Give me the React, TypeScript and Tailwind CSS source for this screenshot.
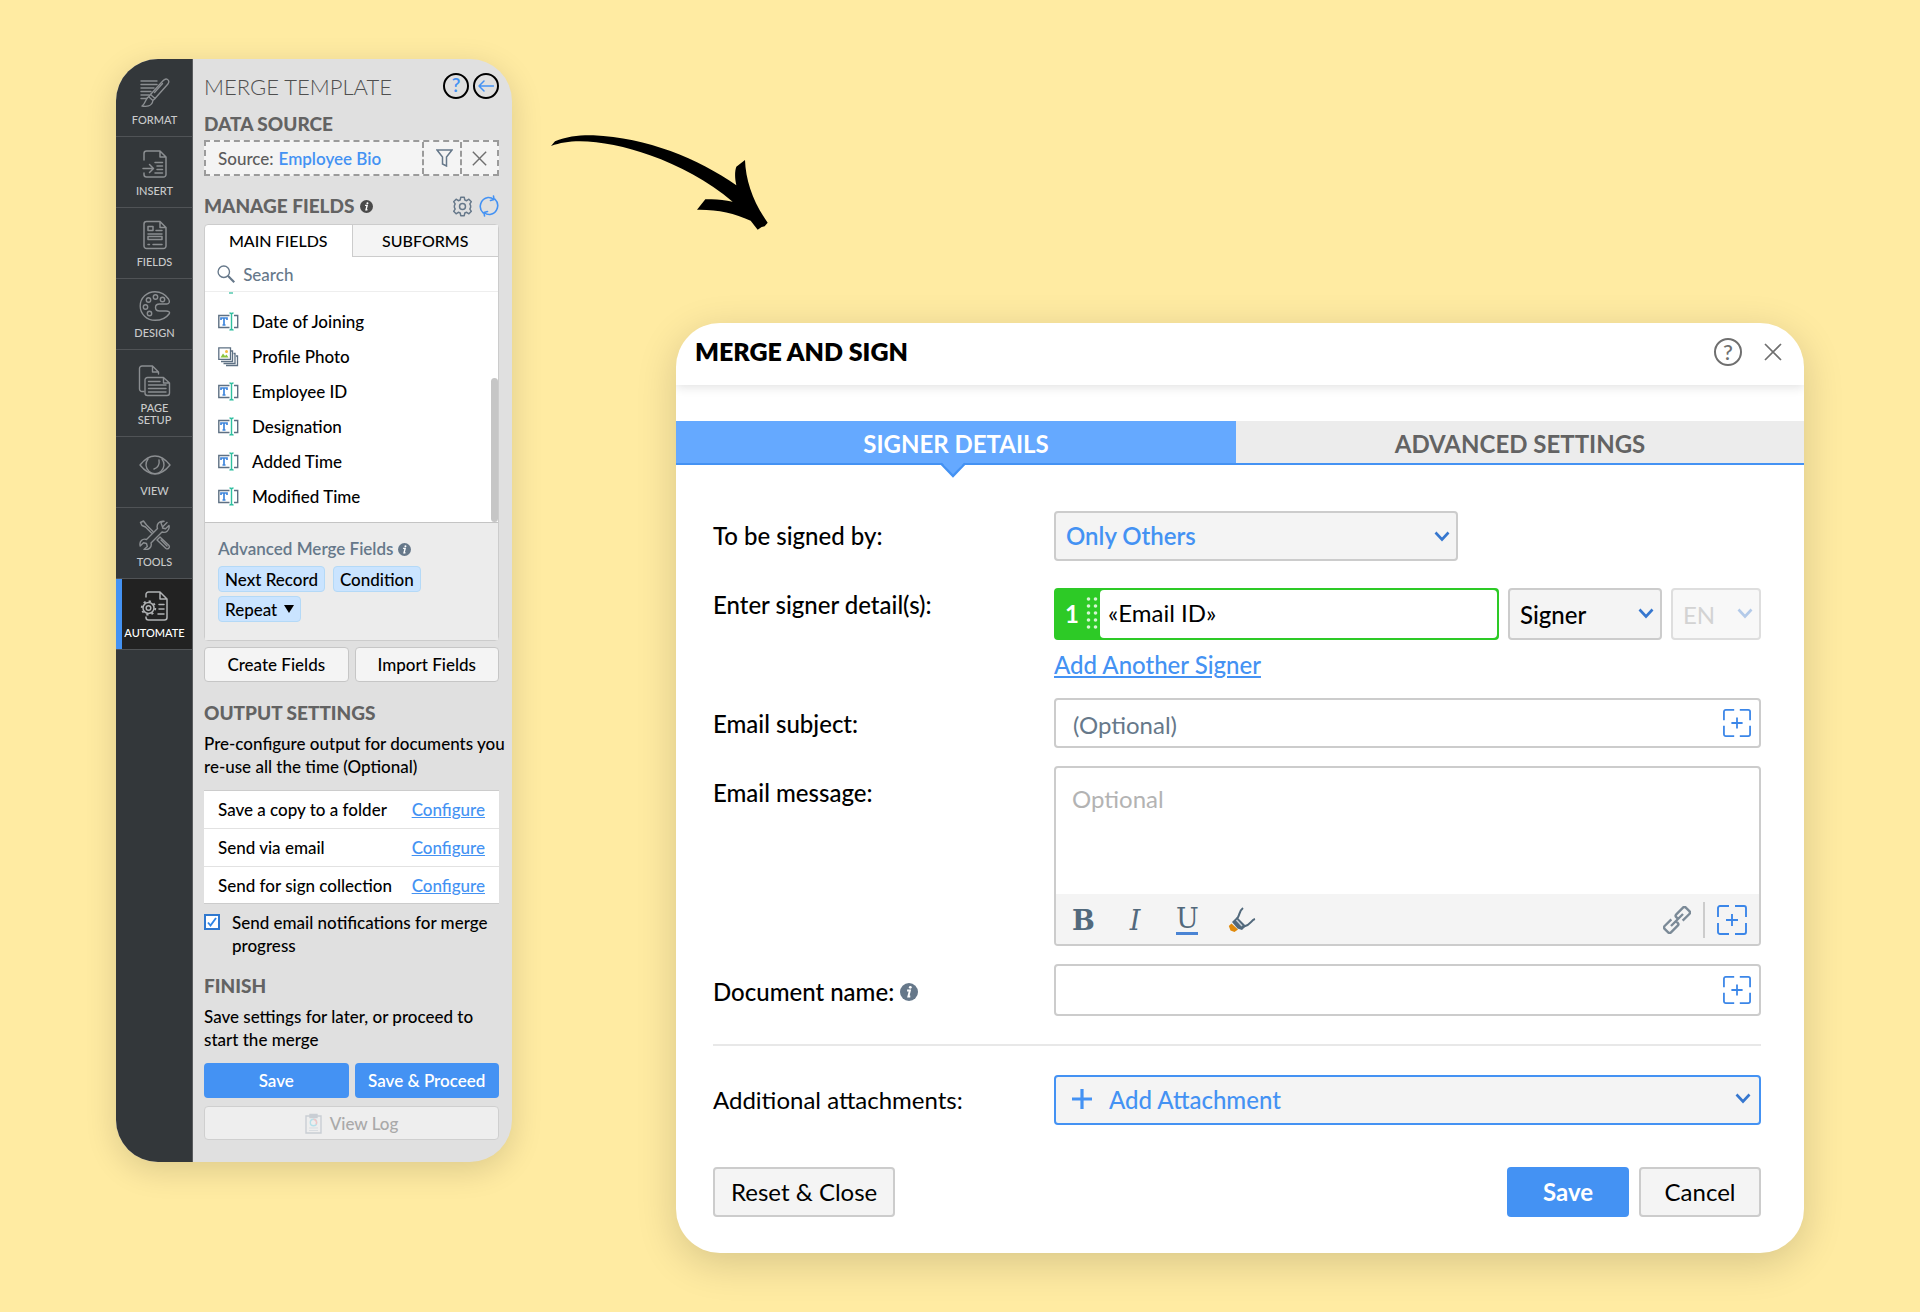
import type { ReactNode } from 'react';

const strokeProps = {
    fill: 'none',
    stroke: 'currentColor',
    strokeLinecap: 'round' as const,
    strokeLinejoin: 'round' as const,
};

function FormatIcon() {
    return (
        <svg width="30" height="30" viewBox="0 0 30 30" strokeWidth="1.4" {...strokeProps}>
            <path d="M1 3h16M1 6.5h16M1 10h13M1 13.500h10M1 17h8M1 20.500h6" />
            <path d="M24.500 1.600c2-1.500 4.800.3 4.200 2.700-.2.800-.6 1.400-1 2L15 20.500l-4.500-4L23 2.800c.5-.5 1-.9 1.500-1.200Z" />
            <path d="m22.500 5.500-8 9M10.500 16.500l-1.800 2.200 4.200 3.800 2.100-2M8.700 18.700C5.500 20 6 25 2 28c4 .8 10 .8 10.900-5.500" />
        </svg>
    );
}

function InsertIcon() {
    return (
        <svg width="30" height="30" viewBox="0 0 30 30" strokeWidth="1.5" {...strokeProps}>
            <path d="M4 11V4.500A2.500 2.500 0 0 1 6.500 2H20l6 6v17.500a2.500 2.500 0 0 1-2.500 2.500h-17A2.500 2.500 0 0 1 4 25.500V24M20 2v6h6" />
            <path d="M3 19.500h10M9.500 15.500l4 4-4 4M15 13.500h7.500M17 17h5.500M17 20.500h5.500M15 24h7.500" />
        </svg>
    );
}

function FieldsIcon() {
    return (
        <svg width="30" height="30" viewBox="0 0 30 30" strokeWidth="1.5" {...strokeProps}>
            <path d="M6.500 1.500H20l6 6V26a2.500 2.500 0 0 1-2.500 2.500h-17A2.500 2.500 0 0 1 4 26V4a2.500 2.500 0 0 1 2.500-2.500ZM20 1.500v6h6" />
            <path d="M8 6.500h5v4H8zM16 10.500h6M8 14h14M8 16.500h14v3H8zM8 24.500h1.500M13 24.500h9" />
        </svg>
    );
}

function DesignIcon() {
    return (
        <svg width="32" height="30" viewBox="0 0 32 30" strokeWidth="1.400" {...strokeProps}>
            <path d="M29.500 8C26.500 3.500 21.500.7 16 .7 8 .7 1.200 7 1.200 15S8 29.300 16 29.300c6 0 11-2 14-6.300 1.500-2-.5-3-3-3h-6.500c-2.500 0-4-1.500-4-3.500s1.500-3.500 4-3.500H28c2.500 0 3-2.500 1.500-5Z" />
            <circle cx="9.500" cy="9" r="2.200" />
            <circle cx="16.500" cy="6" r="2.200" />
            <circle cx="23.500" cy="8.500" r="2.200" />
            <circle cx="6.500" cy="16" r="2.200" />
            <circle cx="10.500" cy="22.500" r="2.200" />
        </svg>
    );
}

function PageSetupIcon() {
    return (
        <svg width="34" height="32" viewBox="0 0 34 32" strokeWidth="1.400" {...strokeProps}>
            <path d="M6 26.500H4A2.500 2.500 0 0 1 1.500 24V3.500A2.500 2.500 0 0 1 4 1h10.500l6 6v2M14.500 1v6h6" />
            <path d="M9.500 12.500h16l6 5.500v10a2.500 2.500 0 0 1-2.500 2.500H9.500A2.500 2.500 0 0 1 7 28V15a2.500 2.500 0 0 1 2.500-2.500ZM25.500 12.500V18h6" />
            <path d="M10.500 16.500H22M10.500 20H28M10.500 23.500H28M10.500 27H28" />
        </svg>
    );
}

function ViewIcon() {
    return (
        <svg width="32" height="30" viewBox="0 0 32 30" strokeWidth="1.400" {...strokeProps}>
            <path d="M1 16c4-5 9-9 15-9s11 4 15 9c-4 5-9 9-15 9S5 21 1 16Z" />
            <path d="M9 10a9 9 0 1 0 14 0" />
            <path d="M20 11c.8 4-1 8-5 9" />
        </svg>
    );
}

function ToolsIcon() {
    return (
        <svg width="32" height="30" viewBox="0 0 32 30" strokeWidth="1.400" {...strokeProps}>
            <path d="M28 2.500 23.500 7l-1.500-4c.5-1 2-1.500 3-1.700-4.500-.8-8 3-6.500 7.200L7.500 19.500C3.500 18 0 21.500 1.200 26l3.300-3.300 3 .8.800 3L5 29.500c4.500 1 8.300-2.500 7-6.500l11-11c4 1.500 8-2 7-6.500l-3.500 3.200-3-.7" />
            <path d="m1.500 2.500 3-1.500 3 4L14 11.500M1.500 2.500l1.500 3 3.500 1.500 6 6M19 19l2-2 9 8.500c1.200 2-1 4.200-3 3L18 20l1-1ZM22 20l6 6" />
        </svg>
    );
}

function AutomateIcon() {
    return (
        <svg width="32" height="30" viewBox="0 0 32 30" strokeWidth="1.500" {...strokeProps}>
            <path d="M7 6V3.500A2.500 2.500 0 0 1 9.500 1H21l7 7v18.500a2.500 2.500 0 0 1-2.500 2.500h-16A2.500 2.500 0 0 1 7 26.500V26M21 1v7h7" />
            <circle cx="9.500" cy="17" r="5.500" />
            <circle cx="9.500" cy="17" r="2.300" />
            <circle cx="9.500" cy="17" r="6.800" strokeWidth="1.800" strokeDasharray="2.200 3.140" strokeLinecap="butt" />
            <path d="M20 13.500h5M20 18h5M19 23h6" />
        </svg>
    );
}

const navItems = [
    { label: 'FORMAT', icon: FormatIcon },
    { label: 'INSERT', icon: InsertIcon },
    { label: 'FIELDS', icon: FieldsIcon },
    { label: 'DESIGN', icon: DesignIcon },
    { label: 'PAGE SETUP', icon: PageSetupIcon, tall: true },
    { label: 'VIEW', icon: ViewIcon },
    { label: 'TOOLS', icon: ToolsIcon },
    { label: 'AUTOMATE', icon: AutomateIcon, active: true },
];

const fields = [
    { name: 'Date of Joining', type: 'text' },
    { name: 'Profile Photo', type: 'photo' },
    { name: 'Employee ID', type: 'text' },
    { name: 'Designation', type: 'text' },
    { name: 'Added Time', type: 'text' },
    { name: 'Modified Time', type: 'text' },
];

const outputs = ['Save a copy to a folder', 'Send via email', 'Send for sign collection'];

function TextFieldIcon() {
    return (
        <svg width="21" height="19" viewBox="0 0 21 19" fill="none">
            <path d="M11.500 3.500H.8v12h10.700M16 3.500h3.700v12H16" stroke="#5d7083" strokeWidth="1.400" />
            <path d="M3 8V6h6v2M6 6v7M4.500 13h3" stroke="#3f86dc" strokeWidth="1.700" />
            <path d="M11.500 1c1.200 0 2 .4 2 1.500v14c0 1.100-.8 1.500-2 1.500M15.500 1c-1.200 0-2 .4-2 1.500v14c0 1.100.8 1.500 2 1.500" stroke="#2fbf9f" strokeWidth="1.400" />
        </svg>
    );
}

function PhotoIcon() {
    return (
        <svg width="21" height="20" viewBox="0 0 21 20" fill="none" stroke="#5d7083" strokeWidth="1.300">
            <path d="M8 18.500h11.500V9H18" />
            <path d="M5.500 16.500H17V6.500h-1.500" />
            <path d="M3 14.500h11.500V4H13" />
            <path d="M.8.800H12.500v11.500H.8z" fill="#fff" />
            <path d="m2.500 10.500 2.500-4 2 2.500 1.500-1.500 2 3z" fill="#8cc63f" stroke="none" />
            <circle cx="8.500" cy="4.500" r="1.500" fill="#f5b83d" stroke="none" />
        </svg>
    );
}

function InfoIcon({ size, className }: { size: number; className: string }) {
    return (
        <svg width={size} height={size} viewBox="0 0 14 14" className={className}>
            <circle cx="7" cy="7" r="7" fill="currentColor" />
            <circle cx="8" cy="3.400" r="1.100" fill="#fff" />
            <path d="M5.500 5.800h2.200l-1.200 4.700h1.500" fill="none" stroke="#fff" strokeWidth="1.500" />
        </svg>
    );
}

function Chevron({ className = '' }: { className?: string }) {
    return (
        <svg width="16" height="11" viewBox="0 0 16 11" className={`pointer-events-none absolute text-[#3677cf] ${className}`}>
            <path d="m1.500 1.500 6.500 7 6.500-7" fill="none" stroke="currentColor" strokeWidth="2.600" />
        </svg>
    );
}

function CloseIcon({ size }: { size: number }) {
    return (
        <svg width={size} height={size} viewBox="0 0 18 18" fill="none" stroke="#6f6f6f" strokeWidth="1.700">
            <path d="m1 1 16 16M17 1 1 17" />
        </svg>
    );
}

function InsertFieldIcon({ size }: { size: number }) {
    return (
        <svg width={size} height={size} viewBox="0 0 30 30" fill="none" stroke="#3b86e8" strokeWidth="1.900">
            <path d="M1 12V3a2 2 0 0 1 2-2h9M18 1h9a2 2 0 0 1 2 2v9M29 18v9a2 2 0 0 1-2 2h-9M12 29H3a2 2 0 0 1-2-2v-9M15 9v12M9 15h12" />
        </svg>
    );
}

function Heading({ children }: { children: ReactNode }) {
    return <h2 className="text-[19px] leading-6 font-black text-[#636363]">{children}</h2>;
}

function Sidebar() {
    return (
        <nav className="w-[77px] shrink-0 border-r border-[#5a5c5e] bg-[#33373a] pt-[7px]">
            {navItems.map((item) => (
                <a
                    key={item.label}
                    href="#"
                    className={`flex flex-col items-center border-b border-[#505356] pb-[10px] text-center ${
                        item.tall ? 'pt-4 pr-4 pl-[17px]' : 'pt-3 pl-px'
                    } ${item.active ? 'bg-[#222222] text-white shadow-[inset_6px_0_0_#4492f3]' : 'text-[#c9cacb]'}`}
                >
                    <span className={`flex h-[30px] items-center ${item.active ? 'text-[#b0b2b4]' : 'text-[#8b8e91]'}`}>
                        <item.icon />
                    </span>
                    <span className="mt-[6px] text-[11px] leading-3 font-medium">{item.label}</span>
                </a>
            ))}
        </nav>
    );
}

function MergePanel() {
    return (
        <section className="flex w-[396px] shrink-0 overflow-hidden rounded-[42px] bg-[#e0e0e0] shadow-[0_8px_32px_rgba(0,0,0,0.14)]">
            <Sidebar />
            <div className="flex-1 pt-[13px] pr-[13px] pb-[22px] pl-[11px] text-[17px] leading-[23px] font-medium">
                <div className="flex h-7 items-center">
                    <h1 className="flex-1 text-[22px] font-light text-[#4f4f4f]">MERGE TEMPLATE</h1>
                    <button aria-label="Help" className="flex size-[26px] items-center justify-center rounded-full border-2 border-black pb-[3px] text-[19px] leading-none font-semibold text-[#4492f3]">
                        ?
                    </button>
                    <button aria-label="Back" className="ml-1 flex size-[26px] items-center justify-center rounded-full border-2 border-black text-[#4492f3]">
                        <svg width="16" height="12" viewBox="0 0 16 12" strokeWidth="1.500" {...strokeProps}>
                            <path d="M15.500 6H1M6 1 1 6l5 5" />
                        </svg>
                    </button>
                </div>

                <div className="mt-3">
                    <Heading>DATA SOURCE</Heading>
                </div>
                <div className="mt-1 flex h-9 border-2 border-dashed border-[#9b9b9b] bg-[#f4f4f4]">
                    <p className="flex flex-1 items-center gap-[5px] pl-3 text-[#5c5c5c]">
                        Source: <span className="font-semibold text-[#4492f3]">Employee Bio</span>
                    </p>
                    <button aria-label="Filter" className="flex w-[38px] items-center justify-center border-l-2 border-dashed border-[#9b9b9b] pl-1">
                        <svg width="17" height="18" viewBox="0 0 17 18" fill="none" stroke="#66788a" strokeWidth="1.500">
                            <path d="M1 1h15l-5.500 7v9l-4-2V8z" />
                        </svg>
                    </button>
                    <button aria-label="Remove source" className="flex w-[37px] items-center justify-center border-l-2 border-dashed border-[#9b9b9b]">
                        <CloseIcon size={15} />
                    </button>
                </div>

                <div className="mt-[18px] flex items-center">
                    <Heading>MANAGE FIELDS</Heading>
                    <InfoIcon size={13} className="ml-[6px] text-[#4a4a4a]" />
                    <button aria-label="Field settings" className="ml-auto">
                        <svg width="21" height="21" viewBox="0 0 24 24" fill="none" stroke="#66788a" strokeWidth="1.700" strokeLinejoin="round">
                            <path d="M10 1.500h4l.6 3 2.200.9 2.500-1.700 2.800 2.800-1.700 2.500.9 2.200v1.600l-.9 2.200 1.700 2.500-2.800 2.800-2.500-1.700-2.200.9-.6 3h-4l-.6-3-2.200-.9-2.500 1.700-2.800-2.800 1.700-2.500-.9-2.200v-1.600l.9-2.200-1.700-2.500 2.800-2.800 2.500 1.700 2.200-.9z" />
                            <circle cx="12" cy="12" r="3.400" />
                        </svg>
                    </button>
                    <button aria-label="Refresh fields" className="ml-[6px]">
                        <svg width="20" height="22" viewBox="0 0 20 22" strokeWidth="1.600" className="text-[#4492f3]" {...strokeProps}>
                            <path d="M4.200 18A9 9 0 0 1 9 2.500c2-.1 4 .3 5.500 1.800M15.800 4A9 9 0 0 1 11 19.500c-2 .1-4-.3-5.500-1.800" />
                            <path d="M11.500 5.500 15 4.500 14.500 1M8.500 16.500 5 17.500l.5 3.500" />
                        </svg>
                    </button>
                </div>

                <div className="mt-[6px] rounded-sm border border-[#cccccc] bg-white">
                    <div role="tablist" className="grid grid-cols-2 text-base leading-[31px]">
                        <button role="tab" aria-selected="true" className="border-b border-transparent">MAIN FIELDS</button>
                        <button role="tab" aria-selected="false" className="border-b border-l border-[#cccccc] bg-[#f4f4f4]">SUBFORMS</button>
                    </div>
                    <label className="flex h-[35px] items-center gap-2 border-b border-[#eeeeee] pl-3">
                        <svg width="20" height="20" viewBox="0 0 20 20" fill="none" stroke="#66788a">
                            <circle cx="7.500" cy="7.500" r="6.300" strokeWidth="1.500" />
                            <path d="m12 12 7 7" strokeWidth="2.400" />
                        </svg>
                        <input type="search" placeholder="Search" aria-label="Search fields" className="w-full outline-none placeholder:text-[#66788a]" />
                    </label>
                    <div className="relative h-[230px] overflow-hidden">
                        <div className="h-3 pl-6">
                            <div className="h-[2px] w-1 bg-[#7fd6c3]" />
                        </div>
                        <ul>
                            {fields.map((field) => (
                                <li key={field.name} className="flex h-[35px] items-center gap-[13px] pl-[13px]">
                                    {field.type === 'photo' ? <PhotoIcon /> : <TextFieldIcon />}
                                    {field.name}
                                </li>
                            ))}
                        </ul>
                        <div className="absolute right-0 bottom-0 h-36 w-[7px] rounded bg-[#c6c6c6]" />
                    </div>
                    <div className="border-t border-[#c4c4c4] bg-[#ececec] px-[13px] pt-4 pb-[18px]">
                        <h3 className="flex items-center gap-1 leading-5 font-semibold text-[#66788a]">
                            Advanced Merge Fields <InfoIcon size={13} className="text-[#66788a]" />
                        </h3>
                        <div className="mt-[7px] flex flex-wrap gap-x-2 gap-y-1">
                            <button className="h-[26px] rounded-sm border border-[#b4d9f7] bg-[#cae4ff] px-[6px]">Next Record</button>
                            <button className="h-[26px] rounded-sm border border-[#b4d9f7] bg-[#cae4ff] px-[6px]">Condition</button>
                            <button aria-haspopup="menu" className="flex h-[26px] items-center gap-[7px] rounded-sm border border-[#b4d9f7] bg-[#cae4ff] px-[6px]">
                                Repeat
                                <svg width="10" height="8" viewBox="0 0 10 8">
                                    <path d="M0 0h10L5 8z" />
                                </svg>
                            </button>
                        </div>
                    </div>
                </div>

                <div className="mt-[6px] grid grid-cols-2 gap-[6px]">
                    <button className="h-[35px] rounded-sm border border-[#c6c6c6] bg-[#f4f4f4]">Create Fields</button>
                    <button className="h-[35px] rounded-sm border border-[#c6c6c6] bg-[#f4f4f4]">Import Fields</button>
                </div>

                <div className="mt-[19px]">
                    <Heading>OUTPUT SETTINGS</Heading>
                </div>
                <p className="mt-[7px] -mr-2">Pre-configure output for documents you re-use all the time (Optional)</p>
                <ul className="mt-3 border-y border-[#cccccc] bg-white">
                    {outputs.map((output) => (
                        <li key={output} className="flex h-[38px] items-center justify-between border-b border-[#e2e2e2] px-[14px] last:h-9 last:border-b-0">
                            {output}
                            <a href="#" className="text-[#4492f3] underline">Configure</a>
                        </li>
                    ))}
                </ul>
                <label className="mt-[7px] flex items-start gap-3">
                    <span className="relative mt-[3px] shrink-0">
                        <input type="checkbox" defaultChecked className="block size-4 appearance-none border-2 border-[#2f78cf] bg-white" />
                        <svg width="12" height="12" viewBox="0 0 12 12" className="pointer-events-none absolute top-[2px] left-[2px]">
                            <path d="m2 6.500 2.500 3L10 2" fill="none" stroke="#2f86e8" strokeWidth="1.900" />
                        </svg>
                    </span>
                    Send email notifications for merge progress
                </label>

                <div className="mt-[17px]">
                    <Heading>FINISH</Heading>
                </div>
                <p className="mt-[7px]">Save settings for later, or proceed to start the merge</p>
                <div className="mt-3 grid grid-cols-2 gap-[6px] font-semibold text-white">
                    <button className="h-[35px] rounded-sm bg-[#4492f3]">Save</button>
                    <button className="h-[35px] rounded-sm bg-[#4492f3]">Save &amp; Proceed</button>
                </div>
                <button disabled className="mt-2 flex h-[34px] w-full items-center justify-center gap-2 rounded-sm border border-[#cfcfcf] bg-[#eeeeee] text-[#a9a9a9]">
                    <svg width="17" height="21" viewBox="0 0 17 21" fill="none" stroke="#c9ced4" strokeWidth="1.400">
                        <path d="M1 3h15v17H1z" />
                        <path d="M5 1.500h7v3H5z" fill="#c9ced4" />
                        <circle cx="8.500" cy="9.500" r="3.200" stroke="#b5e0ea" />
                        <path d="M8.500 6.300a3.200 3.200 0 0 1 2.500 5" stroke="#f2c4c4" />
                        <path d="M4 15h9M4 17.500h9" stroke="#d9dde1" strokeWidth="1" />
                    </svg>
                    View Log
                </button>
            </div>
        </section>
    );
}

function Arrow() {
    return (
        <svg width="217" height="95" viewBox="33 74 651 285" className="ml-[39px]">
            <path d="M33 107 45 93C80 78 120 74 160 75c160 7 315 70 429 150-5-22-5-42 0-56l26-20c2 62 25 128 68 188l-9 11-9 2-12 8-21-27c-50-23-100-34-161-33l25-31c30-2 55 1 82 7-75-63-160-108-248-139-70-26-150-42-210-42-35 0-60 5-87 14Z" />
        </svg>
    );
}

function SignDialog() {
    return (
        <section className="ml-[164px] overflow-hidden rounded-[44px] bg-white text-2xl shadow-[0_10px_40px_rgba(0,0,0,0.16)]">
            <header className="flex h-[62px] items-center pr-[22px] pb-1 pl-[19px] shadow-[0_2px_10px_rgba(0,0,0,0.12)]">
                <h1 className="flex-1 text-[25px] font-extrabold">MERGE AND SIGN</h1>
                <button aria-label="Help" className="flex size-7 items-center justify-center rounded-full border-2 border-[#6f6f6f] text-[22px] leading-none font-medium text-[#6f6f6f]">
                    ?
                </button>
                <button aria-label="Close" className="ml-[22px]">
                    <CloseIcon size={18} />
                </button>
            </header>

            <div role="tablist" className="mt-9 grid grid-cols-[560fr_568fr] border-b-2 border-[#4492f3] font-bold">
                <button role="tab" aria-selected="true" className="relative h-[42px] bg-[#65a9ff] pt-1 text-white">
                    SIGNER DETAILS
                    <svg width="26" height="16" viewBox="0 0 26 16" className="absolute -bottom-[15px] left-1/2 -translate-x-4">
                        <path d="M1 0h24L13 13.500z" fill="#65a9ff" />
                        <path d="M1 1.500 13 14 25 1.500" fill="none" stroke="#4492f3" strokeWidth="2.500" />
                    </svg>
                </button>
                <button role="tab" aria-selected="false" className="bg-[#ececec] pt-1 text-[#636363]">ADVANCED SETTINGS</button>
            </div>

            <form className="pt-[46px] pr-[43px] pb-9 pl-[37px]">
                <div className="grid grid-cols-[341px_1fr]">
                    <label htmlFor="signed-by" className="leading-[50px] font-medium">To be signed by:</label>
                    <div className="relative w-[404px]">
                        <select id="signed-by" className="block h-[50px] w-full appearance-none rounded border-2 border-[#cccccc] bg-[#f4f4f4] px-[10px] font-semibold text-[#4492f3]">
                            <option>Only Others</option>
                        </select>
                        <Chevron className="top-5 right-2" />
                    </div>
                </div>

                <div className="mt-[27px] grid grid-cols-[341px_1fr]">
                    <label htmlFor="signer" className="leading-[34px] font-medium">Enter signer detail(s):</label>
                    <div>
                        <div className="flex h-[52px] gap-[9px]">
                            <div className="flex flex-1 items-center rounded border-2 border-[#2dca26] bg-[#2dca26]">
                                <span className="w-[30px] pl-[9px] font-bold text-white">1</span>
                                <svg width="12" height="34" viewBox="0 0 12 34" fill="#d5f5d3" className="mr-[2px]">
                                    {[2, 9, 16, 23, 30].map((y) => (
                                        <g key={y}>
                                            <circle cx="2.500" cy={y} r="1.800" />
                                            <circle cx="9.500" cy={y} r="1.800" />
                                        </g>
                                    ))}
                                </svg>
                                <input id="signer" defaultValue="«Email ID»" className="h-full w-0 flex-1 rounded bg-white pb-[3px] pl-2 outline-none" />
                            </div>
                            <div className="relative w-[154px]">
                                <select aria-label="Signer role" className="h-full w-full appearance-none rounded border-2 border-[#cccccc] bg-[#f4f4f4] px-[10px] pt-[2px] font-medium">
                                    <option>Signer</option>
                                </select>
                                <Chevron className="top-5 right-2" />
                            </div>
                            <div className="relative w-[90px]">
                                <select disabled aria-label="Language" className="h-full w-full appearance-none rounded border-2 border-[#dedede] bg-[#f8f8f8] px-[10px] pt-[2px] text-[#d3d3d3] opacity-100">
                                    <option>EN</option>
                                </select>
                                <Chevron className="top-5 right-2 opacity-35" />
                            </div>
                        </div>
                        <a href="#" className="mt-[10px] block w-fit leading-[30px] font-medium text-[#4492f3] underline">Add Another Signer</a>
                    </div>
                </div>

                <div className="mt-[18px] grid grid-cols-[341px_1fr]">
                    <label htmlFor="subject" className="pt-[2px] leading-[48px] font-medium">Email subject:</label>
                    <div className="flex h-[50px] items-center rounded border-2 border-[#cccccc] pr-2">
                        <input id="subject" placeholder="(Optional)" className="h-full w-full pt-[2px] pl-[17px] outline-none placeholder:text-[#66788a]" />
                        <button type="button" aria-label="Insert field in subject"><InsertFieldIcon size={28} /></button>
                    </div>
                </div>

                <div className="mt-[18px] grid grid-cols-[341px_1fr]">
                    <label htmlFor="message" className="pt-[2px] leading-[50px] font-medium">Email message:</label>
                    <div className="overflow-hidden rounded border-2 border-[#cccccc]">
                        <textarea id="message" placeholder="Optional" className="block h-[126px] w-full resize-none px-4 pt-[15px] outline-none placeholder:text-[#b3b3b3]" />
                        <div className="flex h-[50px] items-center bg-[#f4f4f4] pt-[2px] pr-3 pl-4 font-['DejaVu_Serif','Liberation_Serif',serif] text-[27px] leading-none text-[#52697c]">
                            <button type="button" aria-label="Bold" className="w-[22px] font-bold">B</button>
                            <button type="button" aria-label="Italic" className="ml-[30px] w-[22px] italic">I</button>
                            <button type="button" aria-label="Underline" className="ml-[30px] w-[22px] border-b-3 border-[#4a84d4]">U</button>
                            <button type="button" aria-label="Highlight" className="ml-[30px]">
                                <svg width="28" height="26" viewBox="0 0 28 26" fill="none" stroke="#52697c" strokeWidth="2">
                                    <path d="M15 1c-4 3-3 7-6 11M27 12c-4 1-4 6-11 7.500" />
                                    <path d="m9 10 9 9-4 4-4.500-1.500L4 15z" fill="#52697c" stroke="none" />
                                    <path d="m8.500 13 5.500 6" stroke="#c9d1d8" strokeWidth="1.500" />
                                    <path d="m3.500 16.500 6.500 6-3.500 2.500-4-1.500L.8 19z" fill="#e08a0c" stroke="none" />
                                </svg>
                            </button>
                            <button type="button" aria-label="Insert link" className="ml-auto text-[#7b8a97]">
                                <svg width="28" height="28" viewBox="0 0 28 28" fill="none" stroke="currentColor" strokeWidth="2.400">
                                    <g transform="rotate(-45 14 14)">
                                        <path d="M12.500 14v2.500a2 2 0 0 1-2 2H1a2 2 0 0 1-2-2v-5a2 2 0 0 1 2-2h9.500M15.500 14v-2.500a2 2 0 0 1 2-2H27a2 2 0 0 1 2 2v5a2 2 0 0 1-2 2h-9.500M5.500 14h17" />
                                    </g>
                                </svg>
                            </button>
                            <span className="mx-3 h-9 w-[2px] bg-[#cccccc]" />
                            <button type="button" aria-label="Insert field in message"><InsertFieldIcon size={30} /></button>
                        </div>
                    </div>
                </div>

                <div className="mt-[18px] grid grid-cols-[341px_1fr]">
                    <label htmlFor="doc-name" className="flex items-center gap-[6px] pt-1 font-medium">
                        Document name: <InfoIcon size={18} className="text-[#66788a]" />
                    </label>
                    <div className="flex h-[52px] items-center rounded border-2 border-[#cccccc] pr-2">
                        <input id="doc-name" className="h-full w-full px-4 outline-none" />
                        <button type="button" aria-label="Insert field in document name"><InsertFieldIcon size={28} /></button>
                    </div>
                </div>

                <hr className="mt-7 border-t-2 border-[#e8e8e8]" />

                <div className="mt-[29px] grid grid-cols-[341px_1fr]">
                    <label htmlFor="attachment" className="leading-[50px]">Additional attachments:</label>
                    <div className="relative">
                        <select id="attachment" className="block h-[50px] w-full appearance-none rounded border-2 border-[#4492f3] bg-[#f4f4f4] pl-[53px] font-medium text-[#4492f3]">
                            <option>Add Attachment</option>
                        </select>
                        <svg width="20" height="20" viewBox="0 0 20 20" className="pointer-events-none absolute top-[14px] left-[18px]">
                            <path d="M10 0v20M0 10h20" stroke="#4492f3" strokeWidth="3.200" />
                        </svg>
                        <Chevron className="top-[18px] right-[10px]" />
                    </div>
                </div>

                <div className="mt-[42px] flex gap-[10px]">
                    <button type="button" className="mr-auto h-[50px] rounded border-2 border-[#cccccc] bg-[#f4f4f4] px-4">Reset &amp; Close</button>
                    <button type="button" className="h-[50px] w-[122px] rounded bg-[#4492f3] font-bold text-white">Save</button>
                    <button type="button" className="h-[50px] w-[122px] rounded border-2 border-[#cccccc] bg-[#f4f4f4]">Cancel</button>
                </div>
            </form>
        </section>
    );
}

export default function App() {
    return (
        <main className="flex min-h-screen items-start bg-[#ffeba2] px-[116px] pt-[59px] pb-[59px] font-[Lato,'Liberation_Sans',sans-serif] text-black">
            <MergePanel />
            <div className="flex-1 pt-[76px]">
                <Arrow />
                <div className="mt-[93px]">
                    <SignDialog />
                </div>
            </div>
        </main>
    );
}
